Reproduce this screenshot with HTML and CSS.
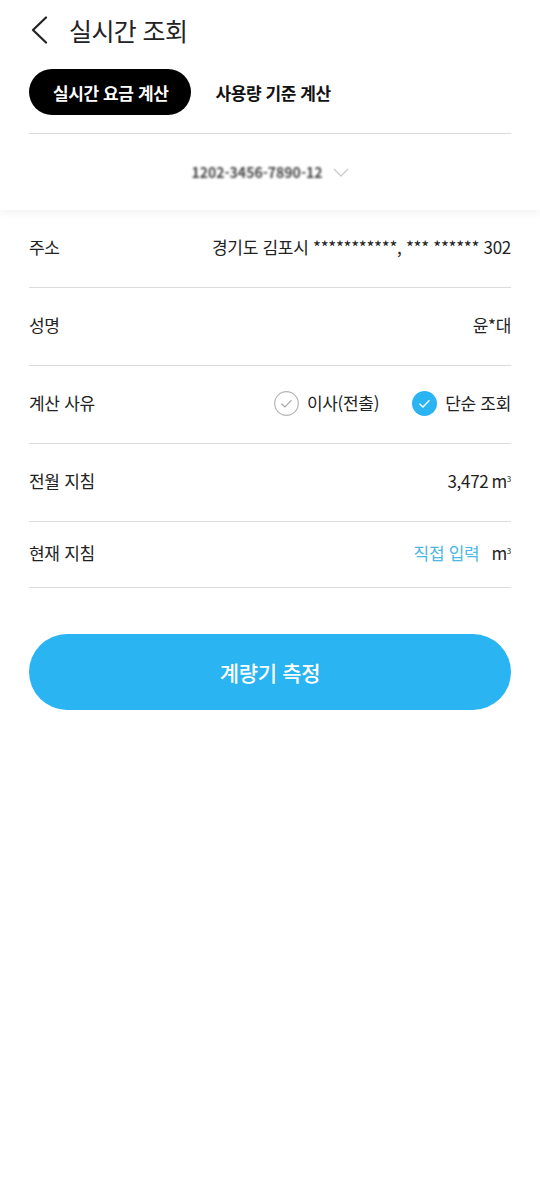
FILE: index.html
```html
<!DOCTYPE html>
<html lang="ko">
<head>
<meta charset="utf-8">
<meta name="viewport" content="width=device-width, initial-scale=1">
<title>실시간 조회</title>
<link rel="stylesheet" href="styles.css">
</head>
<body>
<header class="header">
  <div class="topbar">
    <svg class="back" width="18" height="28" viewBox="0 0 18 28" aria-hidden="true"><path d="M16 1.5 L3 14 L16 26.5" fill="none" stroke="#222" stroke-width="2.2" stroke-linecap="round" stroke-linejoin="round"/></svg>
    <h1 class="title">실시간 조회</h1>
  </div>
  <nav class="tabs">
    <span class="tab tab-active">실시간 요금 계산</span>
    <span class="tab">사용량 기준 계산</span>
  </nav>
  <div class="selector">
    <span class="masked">1202-3456-7890-12</span>
    <svg class="chev" width="16" height="10" viewBox="0 0 16 10" aria-hidden="true"><path d="M1 1 L8 8 L15 1" fill="none" stroke="#ccc" stroke-width="1.4"/></svg>
  </div>
</header>
<main class="content">
  <div class="row">
    <span class="label">주소</span>
    <span class="value">경기도 김포시 ***********, *** ****** 302</span>
  </div>
  <div class="row">
    <span class="label">성명</span>
    <span class="value">윤*대</span>
  </div>
  <div class="row">
    <span class="label">계산 사유</span>
    <div class="options">
      <span class="opt">
        <svg class="chk" width="25" height="25" viewBox="0 0 25 25" aria-hidden="true"><circle cx="12.5" cy="12.5" r="11.8" fill="#fff" stroke="#b5b5b5" stroke-width="1.2"/><path d="M7.5 12.8 L11 16 L17.5 9.2" fill="none" stroke="#a8a8a8" stroke-width="1.2"/></svg>
        이사(전출)
      </span>
      <span class="opt">
        <svg class="chk" width="25" height="25" viewBox="0 0 25 25" aria-hidden="true"><circle cx="12.5" cy="12.5" r="12.5" fill="#2ab4f2"/><path d="M7.5 12.8 L11 16 L17.5 9.2" fill="none" stroke="#fff" stroke-width="1.3"/></svg>
        단순 조회
      </span>
    </div>
  </div>
  <div class="row">
    <span class="label">전월 지침</span>
    <span class="value">3,472 <span class="unit">m<sup>3</sup></span></span>
  </div>
  <div class="row row-last">
    <span class="label">현재 지침</span>
    <span class="value"><span class="input">직접 입력</span><span class="unit">m<sup>3</sup></span></span>
  </div>
  <button class="measure" type="button">계량기 측정</button>
</main>
</body>
</html>
```
FILE: styles.css
```css
* { box-sizing: border-box; }
html, body { margin: 0; padding: 0; background: #fff; }
body {
  font-family: "Noto Sans CJK KR", "Noto Sans", sans-serif;
  color: #222;
  width: 540px;
}
.header {
  padding: 0 29px;
  background: #fff;
  box-shadow: 0 3px 8px rgba(0, 0, 0, 0.05);
  position: relative;
  z-index: 1;
}
.topbar {
  height: 60px;
  display: flex;
  align-items: center;
}
.back { margin-left: 1px; flex: none; }
.title {
  margin: 0 0 0 21px;
  font-size: 25px;
  font-weight: 400;
  line-height: 1;
  color: #222;
  letter-spacing: -0.6px;
}
.tabs {
  margin-top: 9px;
  display: flex;
  align-items: center;
  padding-bottom: 18px;
  border-bottom: 1px solid #dcdcdc;
}
.tab {
  height: 46px;
  display: flex;
  align-items: center;
  padding: 0 24px;
  font-size: 17px;
  font-weight: 700;
  letter-spacing: -0.4px;
  color: #111;
  border-radius: 23px;
}
.tab-active { background: #000; color: #fff; padding: 0 23px 0 24px; }
.selector {
  height: 76px;
  display: flex;
  align-items: center;
  justify-content: center;
  gap: 10px;
}
.masked {
  font-size: 14px;
  font-weight: 700;
  color: #444;
  filter: blur(1.3px);
  letter-spacing: 0;
}
.chev { margin-top: 1px; }
.content { padding: 0 29px; }
.row {
  height: 78px;
  display: flex;
  align-items: center;
  justify-content: space-between;
  border-bottom: 1px solid #dcdcdc;
  padding-bottom: 3px;
}
.row-last { height: 66px; }
.label, .value, .opt {
  font-size: 17px;
  line-height: 1.2;
  color: #222;
  letter-spacing: -0.3px;
}
.value { display: flex; align-items: center; }
.options { display: flex; align-items: center; gap: 33px; }
.opt { display: flex; align-items: center; gap: 8px; }
.chk { flex: none; }
.unit { margin-left: 3px; }
.unit sup { font-size: 8px; vertical-align: 6px; margin-left: 0; }
.input { color: #4db8e3; margin-right: 9px; }
.measure {
  display: flex;
  align-items: center;
  justify-content: center;
  width: 482px;
  height: 76px;
  margin-top: 46px;
  border: 0;
  border-radius: 38px;
  background: #2ab4f2;
  color: #fff;
  font-family: "Noto Sans CJK KR", "Noto Sans", sans-serif;
  font-size: 21px;
  font-weight: 500;
  letter-spacing: -0.3px;
}
```
